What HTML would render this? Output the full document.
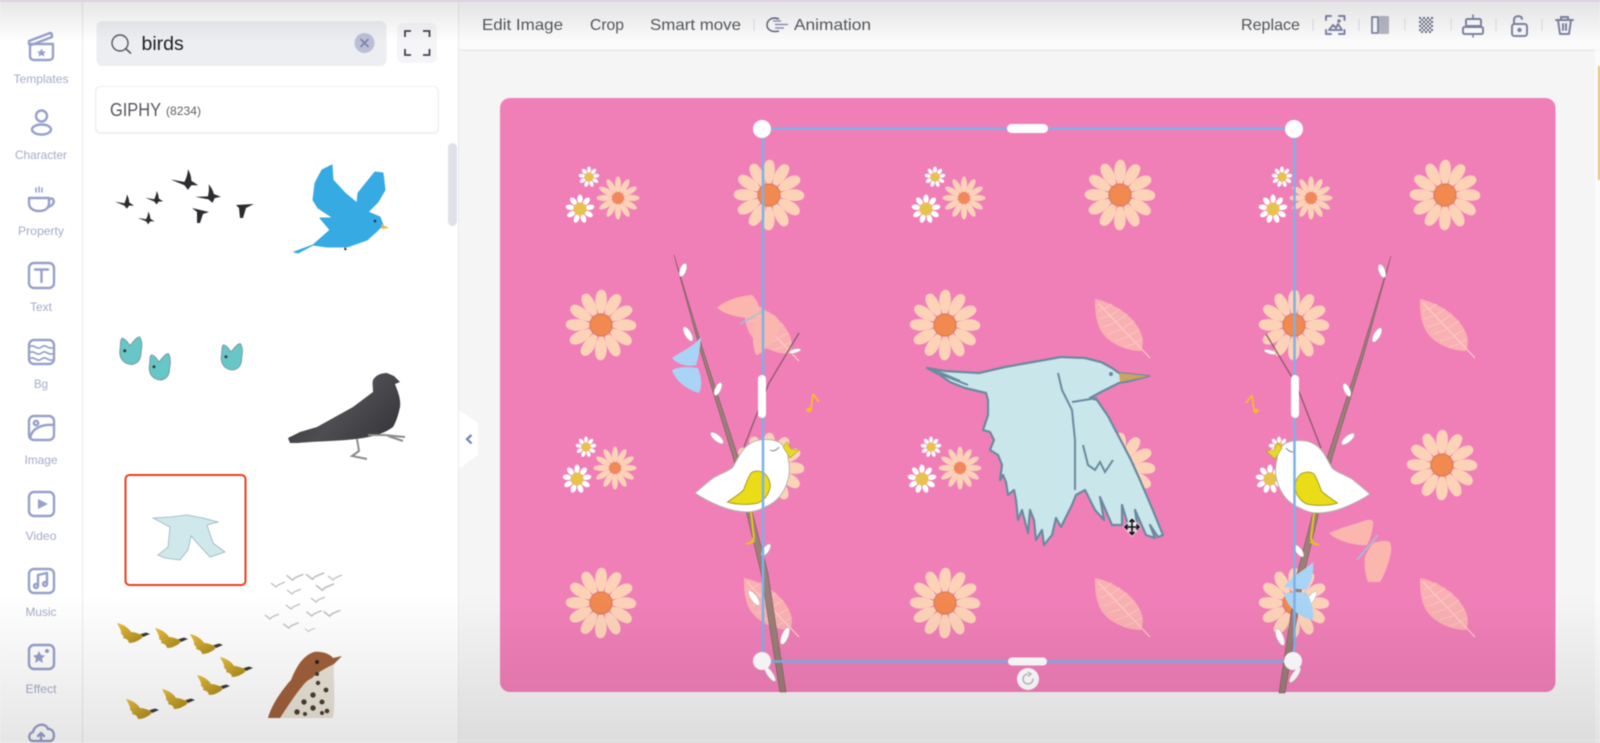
<!DOCTYPE html>
<html lang="en"><head><meta charset="utf-8"><title>Editor</title>
<style>
html,body{margin:0;padding:0;width:1600px;height:743px;overflow:hidden;background:#f5f5f5}
svg{display:block;filter:blur(.5px)}
.nav{font:12px "Liberation Sans",sans-serif;fill:#a3abc9;text-anchor:middle}
.tb{font:16px "Liberation Sans",sans-serif;fill:#55585f}
.ic{fill:none;stroke:#97a0ca;stroke-width:2.4;stroke-linecap:round;stroke-linejoin:round}
.ti{fill:none;stroke:#7f86a6;stroke-width:2;stroke-linecap:round;stroke-linejoin:round}
.sep{stroke:#dedfe3;stroke-width:1}
</style></head><body>
<svg xmlns="http://www.w3.org/2000/svg" width="1600" height="743" viewBox="0 0 1600 743">
<defs>
<linearGradient id="topg" x1="0" y1="0" x2="0" y2="1"><stop offset="0" stop-color="#000" stop-opacity=".1"/><stop offset="1" stop-color="#000" stop-opacity="0"/></linearGradient>
<linearGradient id="botg" x1="0" y1="0" x2="0" y2="1"><stop offset="0" stop-color="#000" stop-opacity="0"/><stop offset="1" stop-color="#000" stop-opacity=".1"/></linearGradient>
<linearGradient id="tan" x1="0" y1="0" x2="1" y2="1"><stop offset="0" stop-color="#e9c040"/><stop offset="1" stop-color="#a8861c"/></linearGradient>
<linearGradient id="pg" x1="0" y1="0" x2="1" y2=".6"><stop offset="0" stop-color="#2e2e33"/><stop offset=".6" stop-color="#4d4d52"/><stop offset="1" stop-color="#3a3a3f"/></linearGradient>

<path id="p1" d="M0,-8C-6,-16 -7.500,-27 -3.500,-33C-1.500,-36 2.500,-36 4.500,-33C7.500,-26 5.500,-16 0,-8Z"/>
<g id="fl">
 <g fill="#fdd3b8">
  <use href="#p1"/><use href="#p1" transform="rotate(30)"/><use href="#p1" transform="rotate(60)"/><use href="#p1" transform="rotate(90)"/><use href="#p1" transform="rotate(120)"/><use href="#p1" transform="rotate(150)"/><use href="#p1" transform="rotate(180)"/><use href="#p1" transform="rotate(210)"/><use href="#p1" transform="rotate(240)"/><use href="#p1" transform="rotate(270)"/><use href="#p1" transform="rotate(300)"/><use href="#p1" transform="rotate(330)"/>
 </g>
 <circle r="11" fill="#f2894f" stroke="#d97f5c" stroke-width="1.300"/>
</g>
<g id="wf">
 <g fill="#fff">
  <ellipse cy="-10" rx="2.700" ry="4.500"/><ellipse cy="-10" rx="2.700" ry="4.500" transform="rotate(40)"/><ellipse cy="-10" rx="2.700" ry="4.500" transform="rotate(80)"/><ellipse cy="-10" rx="2.700" ry="4.500" transform="rotate(120)"/><ellipse cy="-10" rx="2.700" ry="4.500" transform="rotate(160)"/><ellipse cy="-10" rx="2.700" ry="4.500" transform="rotate(200)"/><ellipse cy="-10" rx="2.700" ry="4.500" transform="rotate(240)"/><ellipse cy="-10" rx="2.700" ry="4.500" transform="rotate(280)"/><ellipse cy="-10" rx="2.700" ry="4.500" transform="rotate(320)"/>
 </g>
 <circle r="6.500" fill="#e8c24e"/>
</g>
<g id="cl">
 <g fill="#fdd3b8">
  <ellipse cy="-13.500" rx="3" ry="8"/><ellipse cy="-13.500" rx="3" ry="8" transform="rotate(30)"/><ellipse cy="-13.500" rx="3" ry="8" transform="rotate(60)"/><ellipse cy="-13.500" rx="3" ry="8" transform="rotate(90)"/><ellipse cy="-13.500" rx="3" ry="8" transform="rotate(120)"/><ellipse cy="-13.500" rx="3" ry="8" transform="rotate(150)"/><ellipse cy="-13.500" rx="3" ry="8" transform="rotate(180)"/><ellipse cy="-13.500" rx="3" ry="8" transform="rotate(210)"/><ellipse cy="-13.500" rx="3" ry="8" transform="rotate(240)"/><ellipse cy="-13.500" rx="3" ry="8" transform="rotate(270)"/><ellipse cy="-13.500" rx="3" ry="8" transform="rotate(300)"/><ellipse cy="-13.500" rx="3" ry="8" transform="rotate(330)"/>
 </g>
 <circle r="6" fill="#f0885a"/>
 <use href="#wf" transform="translate(-29,-21) scale(.72)"/>
 <use href="#wf" transform="translate(-38,11)"/>
</g>
<g id="lf">
 <path d="M0,0C20,4 42,19 47,37C49,44 47,50 46,52C30,52 10,43 4,28C0,18 0,8 0,0Z" fill="#f9b0b2"/>
 <path d="M3,4L55,59" fill="none" stroke="#fdd0c8" stroke-width="1.100"/>
 <path d="M9,10L17,5M15,17L25,10M21,23L32,15M27,30L39,22M33,37L44,31M39,44L47,40M3,12L8,10M4,20L14,17M8,28L20,24M13,35L26,31M20,42L33,38M29,48L39,45" fill="none" stroke="#fcc8c4" stroke-width=".8"/>
</g>
<g id="dk">
 <path d="M-9,-3L3,-1C5,-5 6,-9 6,-12C8,-9 9,-5 9,-2L15,2L9,2L6,6L3,2L-9,-3Z" fill="#2c2c30"/>
</g>
<g id="tl">
 <path d="M-9,0C-8,-6 -9,-10 -7,-11C-4,-10 -2,-7 -1,-5C2,-8 4,-12 7,-12C9,-9 9,-4 8,0C8,5 6,9 1,10C-5,10 -9,6 -9,0Z" fill="#67c6c6" stroke="#7d9aa0" stroke-width=".8"/>
 <circle cx="-5" cy="-1" r="1.200" fill="#333"/>
</g>
<g id="yd">
 <path d="M-13,-14C-8,-13 -2,-10 1,-5C4,-5 7,-4 9,-3L13,-3L12,1C8,4 4,6 -1,6C-2,2 -4,2 -7,1C-6,-1 -7,-2 -9,-3C-8,-6 -11,-10 -13,-14Z" fill="url(#tan)"/>
 <path d="M11,-3L16,-4.500L20,-3L13,0Z" fill="#3a3a36"/>
</g>
<path id="gb" d="M-7,-3L-2,1L0,-1L7,-4" fill="none" stroke="#bfc1be" stroke-width="1.300"/>

<g id="branch">
 <path d="M674,255L701,353L733,457L761,573L780,692L786,692L768,573L738,457L704,353Z" fill="#9b7f78" stroke="#7e5a5c" stroke-width=".6"/>
 <path d="M799,333L769,383L744,447" fill="none" stroke="#8a5a68" stroke-width="1.300"/>
 <g fill="#fff" stroke="#bda9a9" stroke-width=".5">
  <ellipse cx="683" cy="270" rx="3.200" ry="7" transform="rotate(20 683 270)"/>
  <ellipse cx="688" cy="334" rx="3.200" ry="8" transform="rotate(-30 688 334)"/>
  <ellipse cx="718" cy="389" rx="3" ry="7" transform="rotate(25 718 389)"/>
  <ellipse cx="717" cy="438" rx="3.200" ry="8" transform="rotate(-50 717 438)"/>
  <ellipse cx="795" cy="351" rx="2" ry="6" transform="rotate(75 795 351)"/>
  <ellipse cx="766" cy="550" rx="3" ry="7" transform="rotate(35 766 550)"/>
  <ellipse cx="754" cy="598" rx="3.200" ry="9" transform="rotate(-35 754 598)"/>
  <ellipse cx="785" cy="636" rx="3.500" ry="9" transform="rotate(22 785 636)"/>
  <ellipse cx="770" cy="674" rx="3" ry="9" transform="rotate(-35 770 674)"/>
 </g>
 <path d="M713,478C722,472 730,470 733,467L742,462L737,472L722,484Z" fill="#dfc53a"/>
 <path d="M695,493C702,487 708,482 713,478C722,473 729,471 733,467C738,458 742,448 751,443C757,439 770,438 779,442C785,446 788,452 788,458C790,466 790,475 787,483C783,495 775,503 765,507C758,511 752,512 747,512C738,512 730,510 722,507C712,503 702,498 695,493Z" fill="#fff" stroke="#b5b0a8" stroke-width="1"/>
 <path d="M727.500,502C733,498 740,494 743.500,490C746,484 748,477 751,473C755,470 761,471 764,473C769,477 771,484 770,488C768,496 763,501 758,503C750,505 737,505 727.500,502Z" fill="#ebdc18" stroke="#a79b28" stroke-width="1"/>
 <path d="M783,447L787,442L791,449L799,450L790,458Z" fill="#e9d72c" stroke="#a99d2a" stroke-width=".6"/>
 <path d="M770,450C773,452 777,450 779,447" fill="none" stroke="#8a8a80" stroke-width="1"/>
 <path d="M751,512L754,538L750,544M746,544L755,541" fill="none" stroke="#e4bd2a" stroke-width="2.200"/>
 <path d="M813,394L819,402M813,394L811,409" fill="none" stroke="#f4bd28" stroke-width="1.700"/>
 <ellipse cx="809" cy="410" rx="2.800" ry="2.200" fill="#f4bd28"/>
</g>
</defs>

<!-- base -->
<rect width="1600" height="743" fill="#f5f5f5"/>
<rect x="0" y="0" width="82" height="743" fill="#fff"/>
<rect x="82" y="0" width="1" height="743" fill="#e8e8ec"/>
<rect x="83" y="0" width="375" height="743" fill="#fff"/>
<rect x="458" y="0" width="1" height="743" fill="#e9e9ec"/>
<rect x="459" y="0" width="1141" height="50" fill="#fbfbfb"/>
<rect x="459" y="49.500" width="1141" height="1.500" fill="#e9e9e9"/>
<rect x="1595" y="50" width="5" height="693" fill="#fbfbfb"/>
<rect x="1598" y="66" width="2" height="114" fill="#e9c275"/>

<!-- sidebar -->
<g class="ic">
 <path d="M30,44H53V56C53,59 51,60 49,60H34C32,60 30,59 30,56Z"/>
 <path d="M29,44L29,41L50,33C52,33 52,35 52,37L31,45"/>
 <path d="M41.500,48.500L43,51.500H46L43.800,53.500L44.500,56.500L41.500,55L38.500,56.500L39.200,53.500L37,51.500H40Z" fill="#97a0ca" stroke="none"/>
 <circle cx="41.500" cy="116" r="5.500"/><ellipse cx="41.500" cy="129.500" rx="9.500" ry="5"/>
 <path d="M29,198H49V203C49,209 44,211 39,211C33,211 29,208 29,203Z"/><path d="M49,199C54,197 55,202 52,205L47,208"/>
 <path d="M36,188V192M39,187V192M42,188V192" stroke-width="1.500"/>
 <rect x="29" y="263" width="25" height="25" rx="5"/><path d="M35,269.500H48M41.500,269.500V282"/>
 <rect x="29" y="340" width="25" height="24" rx="5"/><path d="M29,347C34,343 37,351 41.500,347C46,343 49,351 54,347M29,353C34,349 37,357 41.500,353C46,349 49,357 54,353M29,359C34,355 37,363 41.500,359C46,355 49,363 54,359" stroke-width="1.700"/>
 <rect x="29" y="416" width="25" height="24" rx="5"/><circle cx="36" cy="423" r="2.200"/><path d="M30,438C32,428 42,424 54,425"/>
 <rect x="29" y="492" width="25" height="24" rx="5"/>
 <path d="M38,499L48,504L38,509Z" fill="#97a0ca" stroke="none"/>
 <rect x="29" y="569" width="25" height="24" rx="5"/>
 <path d="M38,586V575L47,573V584"/><circle cx="36" cy="586" r="2"/><circle cx="45" cy="584" r="2"/>
 <rect x="29" y="645" width="25" height="24" rx="5"/>
 <path d="M39,651L41,655L45,655.500L42,658.500L43,663L39,660.500L35,663L36,658.500L33,655.500L37,655Z" fill="#97a0ca" stroke="none"/><circle cx="47" cy="651" r="2" fill="#97a0ca" stroke="none"/>
 <path d="M33,741C28,741 28,733 33,732C35,724 45,722 48,729C55,728 56,741 50,741Z"/><path d="M41,741V733M38,736L41,733L44,736"/>
</g>
<text class="nav" x="41" y="83" textLength="55" lengthAdjust="spacingAndGlyphs">Templates</text>
<text class="nav" x="41" y="159" textLength="52" lengthAdjust="spacingAndGlyphs">Character</text>
<text class="nav" x="41" y="235" textLength="46" lengthAdjust="spacingAndGlyphs">Property</text>
<text class="nav" x="41" y="311" textLength="22" lengthAdjust="spacingAndGlyphs">Text</text>
<text class="nav" x="41" y="388" textLength="14" lengthAdjust="spacingAndGlyphs">Bg</text>
<text class="nav" x="41" y="464" textLength="33" lengthAdjust="spacingAndGlyphs">Image</text>
<text class="nav" x="41" y="540" textLength="31" lengthAdjust="spacingAndGlyphs">Video</text>
<text class="nav" x="41" y="616" textLength="31" lengthAdjust="spacingAndGlyphs">Music</text>
<text class="nav" x="41" y="693" textLength="31" lengthAdjust="spacingAndGlyphs">Effect</text>

<!-- search -->
<rect x="96.500" y="21" width="290" height="45" rx="6" fill="#eceef2"/>
<circle cx="120" cy="43" r="8" fill="none" stroke="#55585f" stroke-width="1.400"/><path d="M126,49L130.500,53" stroke="#55585f" stroke-width="1.600" stroke-linecap="round"/>
<text x="141.500" y="50" font-family="Liberation Sans, sans-serif" font-size="19.500" fill="#1d1d22">birds</text>
<circle cx="364.500" cy="43" r="10" fill="#bbbfd6"/>
<path d="M360.500,39L368.500,47M368.500,39L360.500,47" stroke="#7d84a6" stroke-width="1.700"/>
<rect x="397" y="23" width="40" height="40" rx="6" fill="#f5f5f7"/>
<path d="M405,37V31H411M423,31H429.500V37M405,49V55H411M423,55H429.500V49" fill="none" stroke="#3f4350" stroke-width="1.800"/>

<rect x="95" y="86" width="344" height="48" rx="5" fill="#f0f0f3"/>
<rect x="96.500" y="87" width="341" height="45" rx="4" fill="#fff"/>
<text x="110" y="116" font-family="Liberation Sans, sans-serif" font-size="18" fill="#54565c" textLength="51" lengthAdjust="spacingAndGlyphs">GIPHY</text>
<text x="166" y="115" font-family="Liberation Sans, sans-serif" font-size="12" fill="#5f6168" textLength="35" lengthAdjust="spacingAndGlyphs">(8234)</text>
<rect x="448" y="143" width="9" height="83" rx="4.500" fill="#e0e0e8"/>

<!-- thumbnails -->
<use href="#dk" transform="translate(122,204) scale(.8)"/>
<use href="#dk" transform="translate(152,200) scale(.75)"/>
<use href="#dk" transform="translate(144,220) scale(.7)"/>
<use href="#dk" transform="translate(181,183) scale(1.15)"/>
<use href="#dk" transform="translate(205,198) scale(1.05) rotate(-12)"/>
<path d="M192,208L209,212L203,214L200,223L197,223L197,212Z" fill="#2c2c30"/>
<path d="M236,205L254,204L246,208L243,218L240,218L239,208Z" fill="#2c2c30"/>

<!-- blue bird -->
<path d="M294,252L313,245L330,230L320,218L333,218L318,208L313,200L315,183L322,170L332,165L333,180L345,193L357,203L358,193L366,183L375,172L383,173L385,190L378,202L368,212L380,217L383,225L376,232L367,240L347,247L327,247L313,245L298,253Z" fill="#36aae2" stroke="#36aae2" stroke-linejoin="round"/>
<path d="M345,247L344,250L347,250Z" fill="#123"/>
<circle cx="375" cy="221" r="1.300" fill="#12344d"/>
<path d="M381,224L389,228L382,229Z" fill="#efb24c"/>

<use href="#tl" transform="translate(131,352) scale(1.25)"/>
<use href="#tl" transform="translate(160,368) scale(1.2)"/>
<use href="#tl" transform="translate(232,358) scale(1.2)"/>

<!-- pigeon -->
<path d="M387,373L394,376L400,382L395,384C398,392 401,399 400,407C398,416 396,422 393,427C385,433 375,436 363,438C345,441 320,441 298,443L290,443L288,438L300,432L317,427L335,417L353,407L365,398L373,392C373,386 372,384 373,380C376,375 381,373 387,373Z" fill="url(#pg)"/>
<path d="M357,439L359,451L352,456L367,459M368,435L384,435L405,437M388,436L403,441" fill="none" stroke="#8c8c8c" stroke-width="2"/>

<!-- selected -->
<rect x="125.500" y="475" width="120" height="110" rx="4" fill="#fff" stroke="#f23c1a" stroke-width="2"/>
<path d="M153,518L170,517L187,515L203,518L218,522L207,525L213,543L225,552L210,557L197,543L191,536L188,550L180,560L165,558L158,555L168,547L170,527Z" fill="#cfe8ec" stroke="#9bb2bc" stroke-width=".8"/>

<!-- gray flock -->
<use href="#gb" transform="translate(278,586)"/><use href="#gb" transform="translate(295,579) scale(1.2)"/><use href="#gb" transform="translate(315,578) scale(1.3)"/><use href="#gb" transform="translate(335,579)"/>
<use href="#gb" transform="translate(294,593)"/><use href="#gb" transform="translate(325,589) scale(1.3)"/><use href="#gb" transform="translate(318,601)"/><use href="#gb" transform="translate(293,608)"/><use href="#gb" transform="translate(272,618)"/><use href="#gb" transform="translate(314,615) scale(1.1)"/><use href="#gb" transform="translate(332,615) scale(1.2)"/><use href="#gb" transform="translate(291,627) scale(1.1)"/><use href="#gb" transform="translate(310,631) scale(.7)"/>

<!-- yellow ducks -->
<use href="#yd" transform="translate(130,637)"/><use href="#yd" transform="translate(168,642)"/><use href="#yd" transform="translate(203,648)"/><use href="#yd" transform="translate(233,671)"/><use href="#yd" transform="translate(210,689)"/><use href="#yd" transform="translate(175,703)"/><use href="#yd" transform="translate(139,713)"/>

<!-- thrush -->
<path d="M268,718C272,704 282,690 291,680C296,668 302,656 314,652C322,651 330,654 333,658L342,656L334,664C333,678 336,700 333,718Z" fill="#e8e2d6"/>
<path d="M268,718C272,704 282,690 291,680C296,668 302,656 314,652C322,651 330,654 333,658L342,656L334,664C326,668 318,672 312,678L307,681C298,690 288,706 280,718Z" fill="#a0603a"/>
<g fill="#4b3d30"><circle cx="318" cy="683" r="2.200"/><circle cx="326" cy="690" r="2.400"/><circle cx="313" cy="695" r="2.700"/><circle cx="322" cy="702" r="2.500"/><circle cx="304" cy="702" r="2.700"/><circle cx="313" cy="708" r="2.700"/><circle cx="327" cy="711" r="2.300"/><circle cx="297" cy="712" r="2.700"/><circle cx="317" cy="674" r="2"/><circle cx="322" cy="713" r="2"/><circle cx="305" cy="714" r="2"/></g>
<circle cx="317" cy="662" r="2" fill="#2a211c"/>

<!-- collapse tab -->
<path d="M459,410L478,423V455L459,469Z" fill="#fff"/>
<path d="M471.500,435L467,439L471.500,443.500" fill="none" stroke="#7484b0" stroke-width="2.200"/>

<!-- toolbar -->
<text class="tb" x="482" y="30" textLength="81" lengthAdjust="spacingAndGlyphs">Edit Image</text>
<text class="tb" x="590" y="30" textLength="34" lengthAdjust="spacingAndGlyphs">Crop</text>
<text class="tb" x="650" y="30" textLength="91" lengthAdjust="spacingAndGlyphs">Smart move</text>
<line class="sep" x1="754" y1="19" x2="754" y2="31"/>
<path d="M779,19C771,16 767,21 767,25C767,29 771,33 779,31" fill="none" stroke="#616680" stroke-width="1.500"/>
<path d="M773,21H781M775,24.500H788M775,28H784" fill="none" stroke="#7d86ab" stroke-width="1.300"/>
<text class="tb" x="794" y="30" textLength="77" lengthAdjust="spacingAndGlyphs">Animation</text>
<text class="tb" x="1241" y="30" textLength="59" lengthAdjust="spacingAndGlyphs">Replace</text>
<g class="sep"><line x1="1313" y1="19" x2="1313" y2="31"/><line x1="1359" y1="19" x2="1359" y2="31"/><line x1="1405" y1="19" x2="1405" y2="31"/><line x1="1451" y1="19" x2="1451" y2="31"/><line x1="1496" y1="19" x2="1496" y2="31"/><line x1="1542" y1="19" x2="1542" y2="31"/></g>
<g class="ti">
 <path d="M1326,20V16H1331M1339,16H1344.500V20M1326,30V34H1331M1339,34H1344.500V30" stroke-dasharray="3 0"/>
 <path d="M1329,30L1333,25L1336,28L1338,24L1342,30Z"/><circle cx="1339" cy="21" r=".8"/>
 <rect x="1372" y="17" width="6" height="16" stroke-width="1.800"/>
 <path d="M1473,15V37" stroke-width="1.600"/>
 <rect x="1466" y="19" width="15" height="7" rx="1.500" fill="#fff"/><rect x="1463" y="27" width="20" height="7" rx="1.500" fill="#fff"/>
 <rect x="1512" y="24" width="15" height="12" rx="2.500"/><path d="M1514,24V20C1514,15 1522,15 1522,19"/><circle cx="1519.500" cy="30" r="1.200" fill="#7f86a6"/>
 <path d="M1556,20H1573M1561,20V17H1568V20M1558,20L1560,34H1569L1571,20M1563,24V30M1566,24V30"/>
</g>
<rect x="1379" y="16" width="10" height="18" rx="1" fill="#b5b8c4"/>
<g fill="#6c7088">
 <path d="M1419,17h2v2h-2zM1423,17h2v2h-2zM1427,17h2v2h-2zM1431,17h2v2h-2zM1421,19h2v2h-2zM1425,19h2v2h-2zM1429,19h2v2h-2zM1419,21h2v2h-2zM1423,21h2v2h-2zM1427,21h2v2h-2zM1431,21h2v2h-2zM1421,23h2v2h-2zM1425,23h2v2h-2zM1429,23h2v2h-2zM1419,25h2v2h-2zM1423,25h2v2h-2zM1427,25h2v2h-2zM1431,25h2v2h-2zM1421,27h2v2h-2zM1425,27h2v2h-2zM1429,27h2v2h-2zM1419,29h2v2h-2zM1423,29h2v2h-2zM1427,29h2v2h-2zM1431,29h2v2h-2zM1421,31h2v2h-2zM1425,31h2v2h-2zM1429,31h2v2h-2z"/>
</g>

<!-- canvas -->
<rect x="500" y="98" width="1055.500" height="594" rx="10" fill="#f07fb8"/>
<use href="#cl" x="618" y="198"/><use href="#fl" x="769" y="195"/><use href="#cl" x="964" y="198"/><use href="#fl" x="1120" y="195"/><use href="#cl" x="1311" y="198"/><use href="#fl" x="1445" y="195"/>
<use href="#fl" x="601" y="325"/><use href="#lf" x="744" y="302"/><use href="#fl" x="945" y="325"/><use href="#lf" x="1095" y="299"/><use href="#fl" x="1294" y="325"/><use href="#lf" x="1420" y="299"/>
<use href="#cl" x="615" y="468"/><use href="#fl" x="769" y="468"/><use href="#cl" x="960" y="468"/><use href="#fl" x="1120" y="468"/><use href="#cl" x="1308" y="468"/><use href="#fl" x="1442" y="465"/>
<use href="#fl" x="601" y="603"/><use href="#lf" x="744" y="578"/><use href="#fl" x="945" y="603"/><use href="#lf" x="1095" y="578"/><use href="#fl" x="1294" y="603"/><use href="#lf" x="1420" y="578"/>

<!-- left peach butterfly -->
<path d="M717,308C725,300 740,296 752,295C757,300 760,306 760,315C752,320 730,318 717,308Z" fill="#fbb7ae"/>
<path d="M760,310C770,312 778,316 779,322C780,332 775,340 770,343C765,350 760,355 756,355C752,345 752,330 755,322Z" fill="#fbb7ae"/>
<path d="M740,324L765,310" stroke="#9cc6d6" stroke-width="1.400" fill="none"/>

<use href="#branch"/>
<!-- left blue butterfly -->
<path d="M701,337C700,350 698,360 696,365C688,367 678,365 672,358C680,352 692,348 701,337Z" fill="#a9d4f5"/>
<path d="M672,370C680,366 690,367 698,368C702,378 702,388 699,393C688,390 676,382 672,370Z" fill="#a9d4f5"/>

<use href="#branch" transform="translate(2065,1) scale(-1,1)"/>
<!-- right peach butterfly -->
<path d="M1329,533C1340,528 1352,525 1367,520C1372,519 1374,521 1373,525C1372,533 1370,540 1367,545C1358,546 1338,542 1329,533Z" fill="#fbb7ae"/>
<path d="M1373,543C1380,541 1386,540 1390,542C1392,548 1391,553 1390,557C1387,568 1384,576 1380,582L1368,582C1365,574 1364,565 1365,557C1367,552 1370,547 1373,543Z" fill="#fbb7ae"/>
<path d="M1357,560L1378,535" stroke="#9cc6d6" stroke-width="1.500" fill="none"/>
<!-- right blue butterfly -->
<path d="M1313,562C1314,572 1312,582 1306,590C1298,589 1290,588 1284,587C1290,577 1305,570 1313,562Z" fill="#a9d4f5"/>
<path d="M1284,594C1292,591 1300,592 1307,593C1312,602 1314,612 1313,620C1300,618 1288,608 1284,594Z" fill="#a9d4f5"/>

<!-- big bird -->
<path d="M927,368L945,371L979,373L1005,367L1033,362L1061,357L1085,358L1101,362L1112,368L1119,373L1149,376L1130,381L1119,383L1101,392L1090,398L1097,400L1108,416L1119,437L1130,458L1140,480L1152,508L1163,535L1158,537L1150,525L1155,538L1146,535L1135,510L1138,530L1128,525L1122,505L1122,525L1112,525L1100,497L1104,520L1095,510L1085,490L1076,495L1072,505L1061,527L1056,518L1052,535L1044,545L1042,530L1036,540L1034,520L1030,510L1028,533L1022,510L1018,520L1016,500L1014,490L1008,495L1006,482L1003,475L1000,480L1002,465L998,455L990,450L994,440L990,432L983,430L988,415L988,400L986,393L965,388L950,382L940,375Z" fill="#c9e6ea" stroke="#6a8aa0" stroke-width="2.200" stroke-linejoin="round"/>
<path d="M1058,373L1062,390L1072,410L1075,440L1075,490M1072,402L1097,398M1083,445L1088,465L1095,470L1100,462L1105,472L1113,460M932,369L960,381M940,374L968,385" fill="none" stroke="#6a8aa0" stroke-width="2"/>
<path d="M1119,373L1149,376L1120,382Z" fill="#c9a35f"/>
<circle cx="1111" cy="374" r="2" fill="#6a8aa0"/>

<!-- selection -->
<g stroke="#7db1e6" stroke-width="2.500" fill="none">
 <path d="M762,128.500H1294M763,129V661M1294.500,129V661M763,661.500H1293"/>
</g>
<g fill="#fff">
 <circle cx="762" cy="129" r="9"/><circle cx="1294" cy="129" r="9"/><circle cx="762" cy="661" r="9"/><circle cx="1293" cy="661" r="9"/>
 <rect x="1007" y="124" width="41" height="9" rx="4.500"/>
 <rect x="1008" y="657.500" width="39" height="8" rx="4"/>
 <rect x="758" y="375" width="8" height="43" rx="4"/>
 <rect x="1291" y="375" width="8" height="43" rx="4"/>
 <circle cx="1028" cy="679" r="11"/>
</g>
<path d="M1033,678.500A5,5 0 1 1 1028,674M1028,672L1031,674L1028,676.500" fill="none" stroke="#b5b5b9" stroke-width="1.300"/>

<!-- cursor -->
<path d="M1132,517L1141,527L1132,537L1123,527Z" fill="#fff" opacity=".6"/>
<path d="M1132,520V534M1125,527H1139M1129.500,522L1132,519.500L1134.500,522M1129.500,532L1132,534.500L1134.500,532M1127.500,524.500L1125,527L1127.500,529.500M1136.500,524.500L1139,527L1136.500,529.500" fill="none" stroke="#111" stroke-width="1.600"/>

<!-- overlays -->
<rect x="0" y="0" width="1600" height="42" fill="url(#topg)"/>
<rect x="0" y="595" width="1600" height="148" fill="url(#botg)"/>
<rect x="0" y="0" width="1600" height="1.500" fill="#dcc5e2"/>
<rect x="83" y="739.500" width="1517" height="1" fill="#e6e6e6"/>
</svg>
</body></html>
